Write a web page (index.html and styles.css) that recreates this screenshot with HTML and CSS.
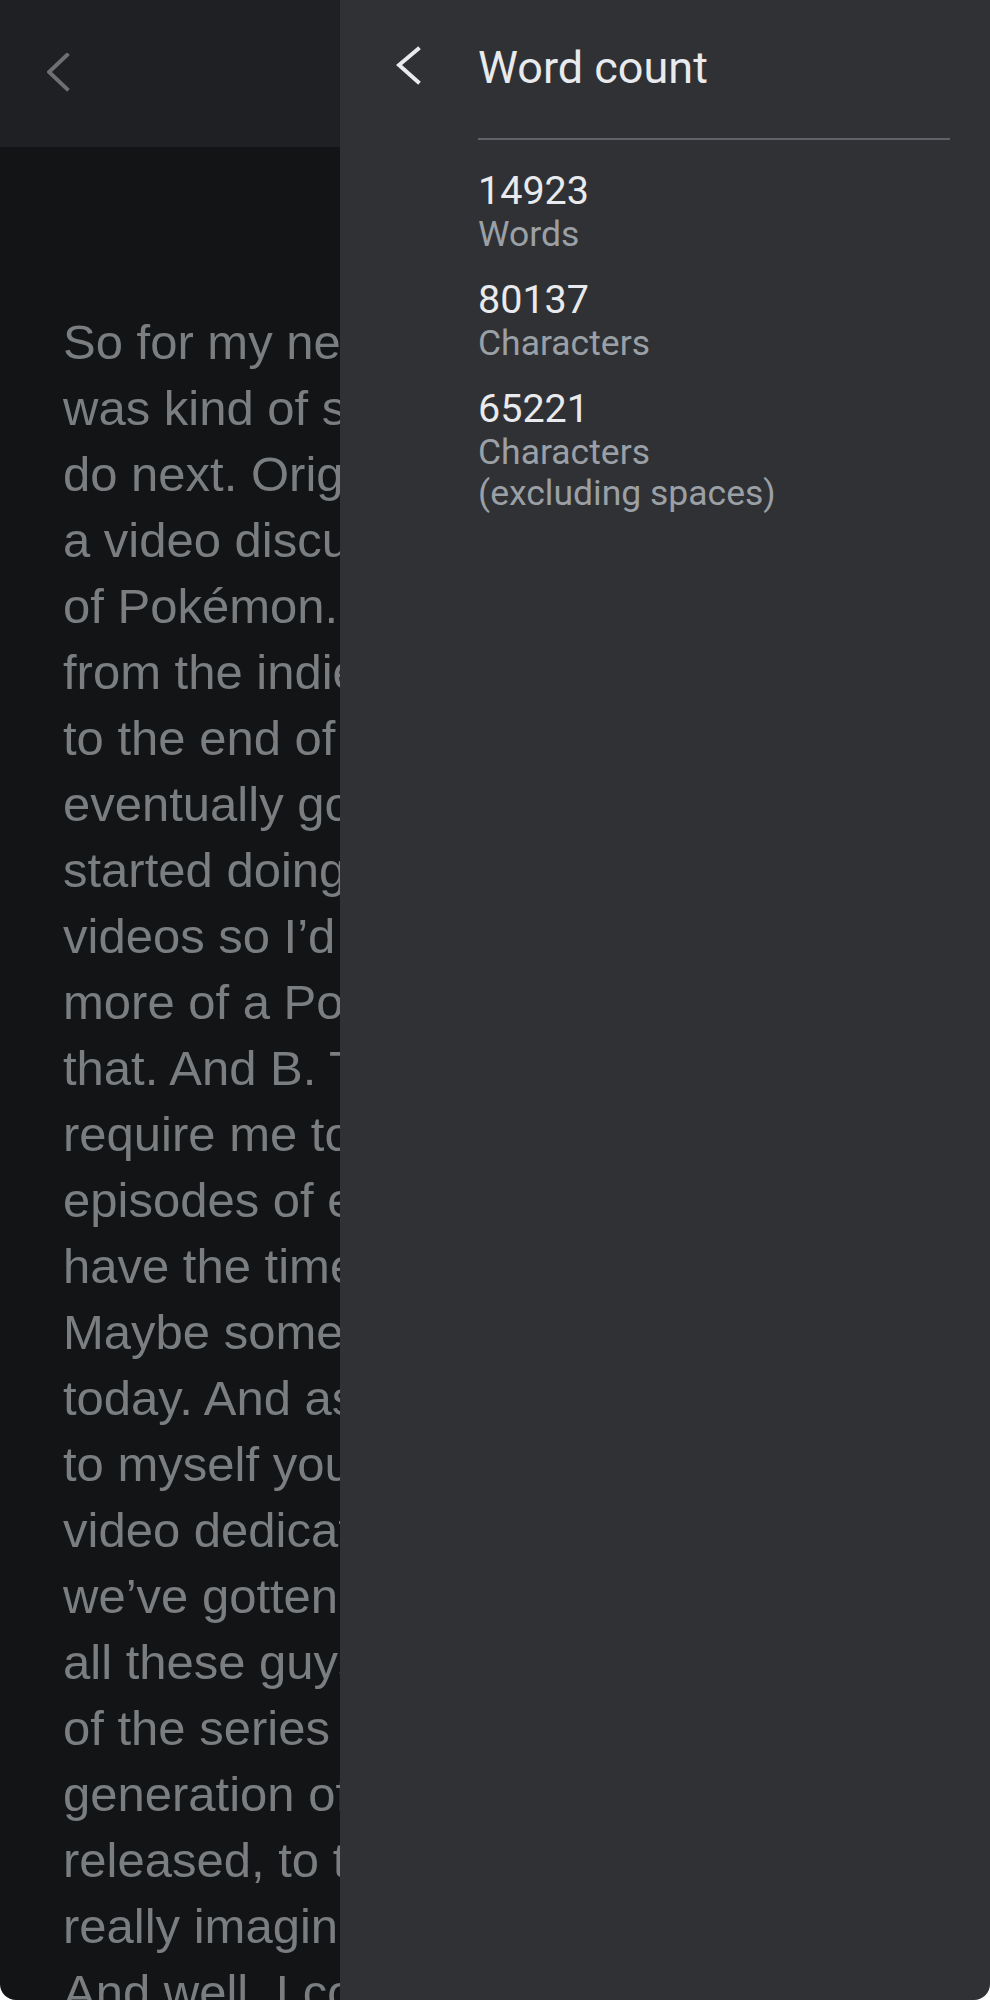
FILE: index.html
```html
<!DOCTYPE html>
<html lang="en">
<head>
  <meta charset="UTF-8">
  <meta name="viewport" content="width=device-width, initial-scale=1.0">
  <title>Word count</title>
  <link rel="stylesheet" href="styles.css">
</head>
<body>
  <main class="screen">
    <section class="doc">
      <header class="doc-bar">
        <svg class="back back-dim" width="30" height="44" viewBox="0 0 30 44">
          <polyline points="20,2 2,19 20,36" fill="none" stroke="currentColor" stroke-width="4" stroke-linecap="square"/>
        </svg>
      </header>
      <p class="doc-text">
        So for my next video I<br>
        was kind of stuck on what to<br>
        do next. Originally I planned<br>
        a video discussing the history<br>
        of Pokémon. Tracing everything<br>
        from the indie roots all the way<br>
        to the end of the anime, but I<br>
        eventually got sidetracked and<br>
        started doing other Pokémon<br>
        videos so I’d A. have to do<br>
        more of a Pokémon anime for<br>
        that. And B. That would<br>
        require me to watch all the<br>
        episodes of every season I don’t<br>
        have the time for right now.<br>
        Maybe someday, but not<br>
        today. And as I was thinking<br>
        to myself you know I’ve never<br>
        video dedicated to Pokémon<br>
        we’ve gotten over the years,<br>
        all these guys from every part<br>
        of the series from the first<br>
        generation of the games ever<br>
        released, to the latest, I<br>
        really imagined that it would be.<br>
        And well, I could do just that.
      </p>
    </section>

    <aside class="drawer">
      <header class="drawer-head">
        <svg class="back" width="30" height="44" viewBox="0 0 30 44">
          <polyline points="22,3 3,19 22,36" fill="none" stroke="currentColor" stroke-width="4" stroke-linecap="square"/>
        </svg>
        <h1 class="title">Word count</h1>
      </header>
      <div class="drawer-body">
        <hr class="rule">
        <dl class="stats">
          <div class="stat">
            <dt class="num">14923</dt>
            <dd class="label">Words</dd>
          </div>
          <div class="stat">
            <dt class="num">80137</dt>
            <dd class="label">Characters</dd>
          </div>
          <div class="stat">
            <dt class="num">65221</dt>
            <dd class="label">Characters<br>(excluding spaces)</dd>
          </div>
        </dl>
      </div>
    </aside>
  </main>
</body>
</html>
```

FILE: styles.css
```css
body {
  margin: 0;
  background-color: #fff;
}

.screen {
  display: flex;
  height: 2000px;
  overflow: hidden;
  border-radius: 0 0 16px 16px;
  font-family: Roboto, "Liberation Sans", sans-serif;
}

.doc {
  flex: none;
  width: 340px;
  overflow: hidden;
  background-color: #121416;
}

.doc-bar {
  display: flex;
  align-items: center;
  height: 147px;
  padding-left: 47px;
  background-color: #1f2023;
}

.back {
  display: block;
  color: #e8eaed;
}

.back-dim {
  color: #6e6f72;
  margin-top: 2px;
}

.doc-text {
  margin: 0;
  padding: 162px 0 0 63px;
  font-family: "Liberation Sans", Arial, sans-serif;
  font-size: 49px;
  line-height: 66px;
  color: #7b7e80;
  white-space: nowrap;
}

.drawer {
  flex: 1;
  background-color: #303134;
  color: #e8eaed;
}

.drawer-head {
  display: flex;
  align-items: center;
  padding: 40px 0 0 56px;
}

.title {
  margin: 0 0 0 52px;
  font-size: 45px;
  font-weight: 400;
  line-height: 56px;
}

.drawer-body {
  padding: 42px 40px 0 138px;
}

.rule {
  margin: 0;
  height: 2px;
  border: 0;
  background-color: #5f6368;
}

.stats {
  display: flex;
  flex-direction: column;
  gap: 22px;
  margin: 28px 0 0;
}

.num {
  font-size: 39.5px;
  line-height: 46px;
}

.label {
  margin: 0;
  font-size: 35.5px;
  line-height: 41px;
  color: #9aa0a6;
}
```
